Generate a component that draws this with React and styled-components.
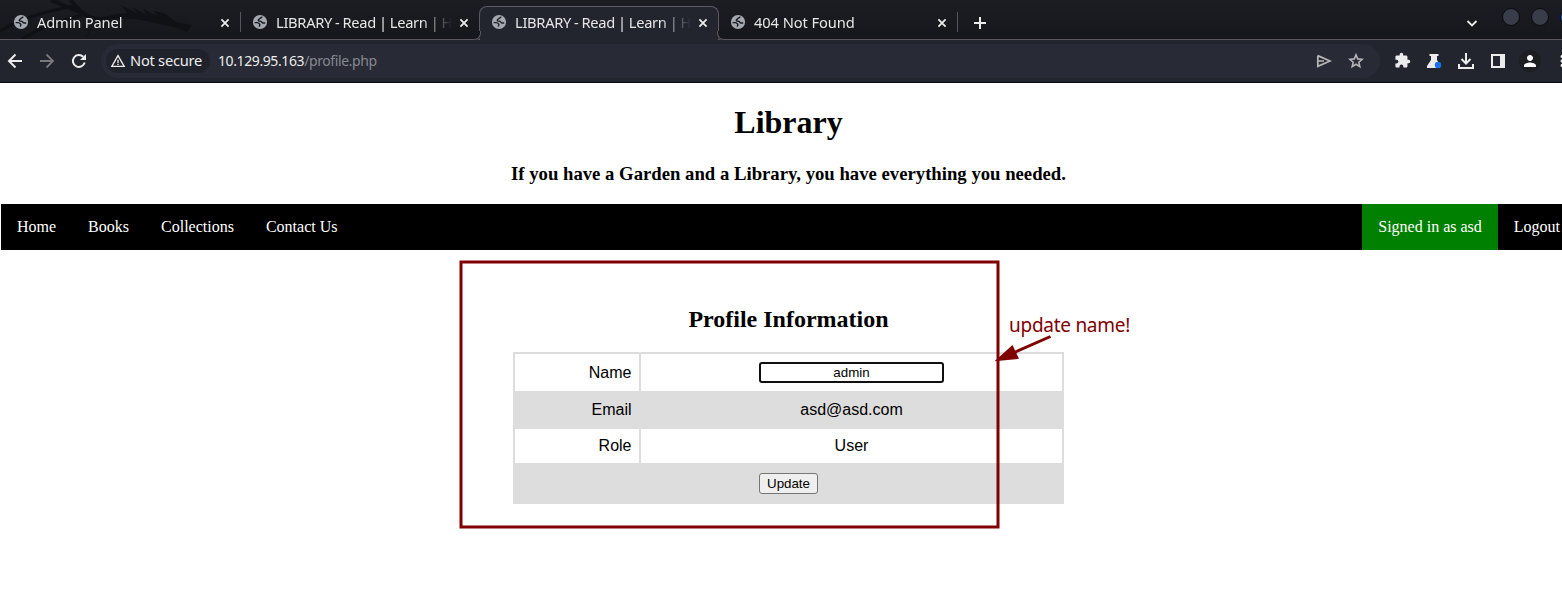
import React from "react";
import styled, { createGlobalStyle, css } from "styled-components";
import { MdExtension, MdMoreVert, MdPerson, MdWarningAmber } from "react-icons/md";

const Global = createGlobalStyle`
  html, body { margin: 0; padding: 0; background: #fff; overflow: hidden; }
  * { box-sizing: border-box; }
  svg { display: block; flex: none; }
`;

const Window = styled.div`
  position: relative;
  width: 1562px;
  height: 607px;
  overflow: hidden;
  background: #fff;
  font-family: "Liberation Serif", serif;
  color: #000;
`;

/* ---------- browser chrome ---------- */

const TabStrip = styled.div`
  position: relative;
  display: flex;
  align-items: flex-end;
  height: 40px;
  background: linear-gradient(#1b1d22, #16171b);
  border-bottom: 1px solid #5b595f;
  font-family: "Noto Sans", sans-serif;
  color: #e6e6e6;
`;

const Wallpaper = styled.svg`
  position: absolute;
  left: 0;
  top: 0;
`;

const flare = css`
  content: "";
  position: absolute;
  bottom: 0;
  width: 9px;
  height: 8px;
  border-bottom: 1px solid #5b595f;
  background: #17181c;
`;

const Tab = styled.div`
  position: relative;
  display: flex;
  align-items: center;
  width: ${(p) => p.$width}px;
  height: 34px;
  padding: 0 8px 1px ${(p) => p.$inset}px;
  ${(p) => p.$divider && css`
    &::after {
      content: "";
      position: absolute;
      right: 0;
      top: 7px;
      width: 1px;
      height: 20px;
      background: #55565a;
    }
  `}
  ${(p) => p.$active && css`
    margin-bottom: -1px;
    padding-bottom: 3px;
    border: 1px solid #5b595f;
    border-bottom: 0;
    border-radius: 8px 8px 0 0;
    background: #23252e;
    &::before {
      ${flare}
      left: -9px;
      border-right: 1px solid #5b595f;
      border-bottom-right-radius: 7px;
      box-shadow: 1px 0 0 #23252e;
    }
    &::after {
      ${flare}
      right: -9px;
      border-left: 1px solid #5b595f;
      border-bottom-left-radius: 7px;
      box-shadow: -1px 0 0 #23252e;
    }
  `}
`;

const TabTitle = styled.span`
  width: 182px;
  margin-left: 8px;
  overflow: hidden;
  white-space: nowrap;
  font-size: 14.67px;
  line-height: 20px;
  letter-spacing: ${(p) => p.$tracking}px;
  word-spacing: ${(p) => p.$gap || 0}px;
  mask-image: linear-gradient(to right, #000 145px, transparent 176px);
`;

const NewTab = styled.div`
  display: flex;
  align-items: center;
  height: 33px;
  margin-left: 16px;
`;

const WindowControls = styled.div`
  display: flex;
  align-items: center;
  height: 33px;
  margin-left: auto;
  margin-right: -16px;
`;

const Dot = styled.span`
  flex: none;
  width: 18px;
  height: 18px;
  margin: -11px 0 0 ${(p) => p.$gap}px;
  border: 1px solid #090a0c;
  border-radius: 50%;
  background: ${(p) => p.$color};
`;

const Toolbar = styled.div`
  display: flex;
  align-items: center;
  height: 43px;
  padding: 0 0 1px 4px;
  background: #23252e;
  border-bottom: 1px solid #08080c;
  color: #ececec;
  font-family: "Noto Sans", sans-serif;
`;

const ToolSlot = styled.div`
  display: flex;
  flex: none;
  align-items: center;
  justify-content: center;
  width: 22px;
  height: 22px;
  margin-right: 10px;
  color: ${(p) => p.$color || "#ececec"};
  border-radius: 50%;
  background: ${(p) => p.$fill || "transparent"};
`;

const Omnibox = styled.div`
  display: flex;
  flex: none;
  align-items: center;
  width: 1279px;
  height: 34px;
  margin-left: 1px;
  padding: 0 3px 0 5px;
  border-radius: 17px;
  background: #282a35;
`;

const SecurityChip = styled.div`
  display: flex;
  align-items: center;
  width: 104px;
  height: 24px;
  padding: 0 0 1px 4px;
  border-radius: 12px;
  background: #20222b;
  font-size: 14.67px;
  letter-spacing: -0.25px;
  white-space: nowrap;
  svg { margin: 1px 4px 0 0; }
`;

const Url = styled.span`
  flex: 1;
  margin-left: 8px;
  font-size: 14px;
  letter-spacing: -0.4px;
  white-space: nowrap;
`;

const UrlPath = styled.span`
  color: #868890;
`;

const Extensions = styled.div`
  display: flex;
  flex: none;
  margin-left: 11px;
`;

/* ---------- page ---------- */

const Page = styled.main`
  width: 1575px;
  margin-left: 1px;
`;

const SiteHeader = styled.header`
  height: 121px;
  padding-top: 21px;
  text-align: center;
`;

const SiteTitle = styled.h1`
  margin: 0 0 22px;
  font-size: 32px;
  line-height: 37px;
`;

const Tagline = styled.h3`
  margin: 0;
  font-size: 18.72px;
  line-height: 21px;
`;

const Nav = styled.nav`
  display: flex;
  height: 46px;
  background: #000;
`;

const NavItem = styled.a`
  padding: 14px 16px;
  font-size: 16px;
  line-height: 18px;
  color: #fff;
  background: ${(p) => (p.$highlight ? "green" : "transparent")};
  margin-left: ${(p) => (p.$highlight ? "auto" : "0")};
`;

const Profile = styled.section`
  display: flex;
  flex-direction: column;
  align-items: center;
  padding-top: 56px;
`;

const ProfileTitle = styled.h2`
  margin: 0 0 19px;
  font-size: 24px;
  line-height: 27px;
`;

const Table = styled.div`
  width: 551px;
  border: 2px solid #ddd;
  font-family: "Liberation Sans", Arial, sans-serif;
  font-size: 16px;
`;

const Row = styled.div`
  display: flex;
  align-items: stretch;
  height: ${(p) => p.$height}px;
  background: ${(p) => (p.$shaded ? "#ddd" : "#fff")};
`;

const Label = styled.div`
  display: flex;
  align-items: center;
  justify-content: flex-end;
  width: 126px;
  padding-right: 7.5px;
  border-right: 2px solid #ddd;
`;

const Value = styled.div`
  display: flex;
  flex: 1;
  align-items: center;
  justify-content: center;
`;

const NameInput = styled.input`
  width: 185px;
  height: 21px;
  padding: 0;
  border: 2px solid #101010;
  border-radius: 3px;
  outline: 0;
  background: #fff;
  text-align: center;
  font: 13.333px "Liberation Sans", Arial, sans-serif;
`;

const UpdateButton = styled.button`
  width: 59px;
  height: 21px;
  margin-top: 2px;
  padding: 0;
  border: 1px solid #767676;
  border-radius: 3px;
  background: #efefef;
  font: 13.333px "Liberation Sans", Arial, sans-serif;
  color: #000;
`;

/* ---------- markup over the page ---------- */

const Highlight = styled.svg`
  position: absolute;
  left: 0;
  top: 0;
  pointer-events: none;
`;

const Note = styled.span`
  position: absolute;
  left: 1009px;
  top: 312px;
  font: 19px/26px "Noto Sans", sans-serif;
  letter-spacing: -0.27px;
  color: #800000;
  white-space: nowrap;
`;

/* ---------- icons ---------- */

const Dragon = () => (
  <Wallpaper width="240" height="39" fill="none" stroke="#101115">
    <path d="M0 31C15 22 38 12 76 6M22 39C38 29 58 21 82 15" strokeWidth="3" />
    <path d="M51 0L80 12M70 0C78 7 81 14 92 18C98 20 106 19 112 18" strokeWidth="4" />
    <path d="M86 39C92 23 108 17 132 19C148 20 160 25 174 27L187 32L192 25L176 22L164 13L153 11L158 16L143 9L147 15L132 7L137 13L121 5L127 13C105 14 91 22 86 39Z" fill="#101115" stroke="none" />
  </Wallpaper>
);

const Globe = ({ hole }) => (
  <svg width="16" height="16" viewBox="0 0 16 16">
    <circle cx="8" cy="8" r="7.1" fill="#a4a9b0" />
    <path
      d="M10 2.6C9.9 3.8 8.6 3.7 8 4.4C7.4 5.2 6.2 5.2 6.2 6.4C6.3 7.4 7.6 7.2 8.8 7.4C9.8 7.6 9.8 8.8 10.8 9H13.2M2.6 8.6H5.2C6.6 8.8 7.2 9.6 7.8 10.2C8.2 10.8 7.6 11.4 7.2 12.6"
      fill="none" stroke={hole} strokeWidth="1.4"
    />
  </svg>
);

const Line = ({ size, d, width = 2, color = "#ececec" }) => (
  <svg width={size} height={size} viewBox={`0 0 ${size} ${size}`} fill="none" stroke={color} strokeWidth={width}>
    <path d={d} />
  </svg>
);

const Close = () => <Line size={12} width={1.8} d="M2.4 3.4L9.6 10.6M9.6 3.4L2.4 10.6" />;
const Plus = () => <Line size={12} d="M6 0V12M0 6H12" />;
const Chevron = () => <Line size={12} width={1.8} d="M1.5 4L6 8.5L10.5 4" />;
const Back = () => <Line size={16} d="M15 8H2.5M8.5 1.5L2 8L8.5 14.5" />;
const Forward = () => <Line size={16} color="#78797c" width={1.8} d="M1 8H13.5M7.5 1.5L14 8L7.5 14.5" />;
const Send = () => <Line size={16} color="#b5b6b8" width={1.7} d="M1.8 2.6L14 8L1.8 13.4V2.6M2 8H8" />;
const Star = () => (
  <Line size={16} color="#b5b6b8" width={1.6} d="M8 1.8L9.7 5.9L14.2 6.3L10.8 9.2L11.8 13.6L8 11.3L4.2 13.6L5.2 9.2L1.8 6.3L6.3 5.9Z" />
);

const Reload = () => (
  <svg width="16" height="16" viewBox="0 0 16 16">
    <path d="M13.7 9.6A6 6 0 1 1 12.2 3.8" fill="none" stroke="#ececec" strokeWidth="2" />
    <path d="M15 1V7H9Z" fill="#ececec" />
  </svg>
);

const Flask = () => (
  <svg width="16" height="16" viewBox="0 0 16 16">
    <path d="M3.5 1h9v2H11v4l3 5v3H1v-2l4-6V3H3.5z" fill="#ececec" />
    <circle cx="12" cy="12" r="3.2" fill="#1a73e8" />
  </svg>
);

const Download = () => <Line size={18} d="M9 1v10M4.5 7L9 11.5L13.5 7M2 12v4h14v-4" />;

const SidePanel = () => (
  <svg width="14" height="14" viewBox="0 0 14 14" fill="#ececec">
    <path fillRule="evenodd" d="M0 0h14v14H0zM2 2v10h7V2z" />
  </svg>
);

const LIBRARY = "LIBRARY - Read | Learn | H";
const tabs = [
  { title: "Admin Panel", width: 241, inset: 13, tracking: -0.15, divider: true },
  { title: LIBRARY, width: 238, inset: 11, tracking: -0.29, gap: -0.5 },
  { title: LIBRARY, width: 240, inset: 11, tracking: -0.29, gap: -0.5, active: true },
  { title: "404 Not Found", width: 239, inset: 11, tracking: -0.08, divider: true },
];

export default function App() {
  return (
    <Window>
      <Global />
      <TabStrip>
        <Dragon />
        {tabs.map((t, i) => (
          <Tab key={i} $width={t.width} $inset={t.inset} $active={t.active} $divider={t.divider}>
            <Globe hole={t.active ? "#23252e" : "#18191e"} />
            <TabTitle $tracking={t.tracking} $gap={t.gap}>{t.title}</TabTitle>
            <Close />
          </Tab>
        ))}
        <NewTab><Plus /></NewTab>
        <WindowControls>
          <Chevron />
          <Dot $gap={24} $color="#383d49" />
          <Dot $gap={11} $color="#383d49" />
          <Dot $gap={11} $color="#1a66f0" />
        </WindowControls>
      </TabStrip>

      <Toolbar>
        <ToolSlot><Back /></ToolSlot>
        <ToolSlot><Forward /></ToolSlot>
        <ToolSlot><Reload /></ToolSlot>
        <Omnibox>
          <SecurityChip><MdWarningAmber size={16} />Not secure</SecurityChip>
          <Url>10.129.95.163<UrlPath>/profile.php</UrlPath></Url>
          <ToolSlot><Send /></ToolSlot>
          <ToolSlot><Star /></ToolSlot>
        </Omnibox>
        <Extensions>
          <ToolSlot><MdExtension size={17} /></ToolSlot>
          <ToolSlot><Flask /></ToolSlot>
          <ToolSlot><Download /></ToolSlot>
          <ToolSlot><SidePanel /></ToolSlot>
          <ToolSlot $color="#fff" $fill="#1d1e22"><MdPerson size={18} /></ToolSlot>
          <ToolSlot><MdMoreVert size={18} /></ToolSlot>
        </Extensions>
      </Toolbar>

      <Page>
        <SiteHeader>
          <SiteTitle>Library</SiteTitle>
          <Tagline>If you have a Garden and a Library, you have everything you needed.</Tagline>
        </SiteHeader>
        <Nav>
          <NavItem>Home</NavItem>
          <NavItem>Books</NavItem>
          <NavItem>Collections</NavItem>
          <NavItem>Contact Us</NavItem>
          <NavItem $highlight>Signed in as asd</NavItem>
          <NavItem>Logout</NavItem>
        </Nav>
        <Profile>
          <ProfileTitle>Profile Information</ProfileTitle>
          <Table>
            <Row $height={37}><Label>Name</Label><Value><NameInput defaultValue="admin" /></Value></Row>
            <Row $height={38} $shaded><Label>Email</Label><Value>asd@asd.com</Value></Row>
            <Row $height={34}><Label>Role</Label><Value>User</Value></Row>
            <Row $height={39} $shaded><Value><UpdateButton>Update</UpdateButton></Value></Row>
          </Table>
        </Profile>
      </Page>

      <Highlight width="1562" height="607">
        <rect x="461" y="262" width="537" height="265" fill="none" stroke="#800000" strokeWidth="3" />
        <path d="M1050.5 336.5L1012 353.5" stroke="#800000" strokeWidth="3" />
        <path d="M994.5 361.3L1012.5 345L1019 358.8Z" fill="#800000" />
      </Highlight>
      <Note>update name!</Note>
    </Window>
  );
}
